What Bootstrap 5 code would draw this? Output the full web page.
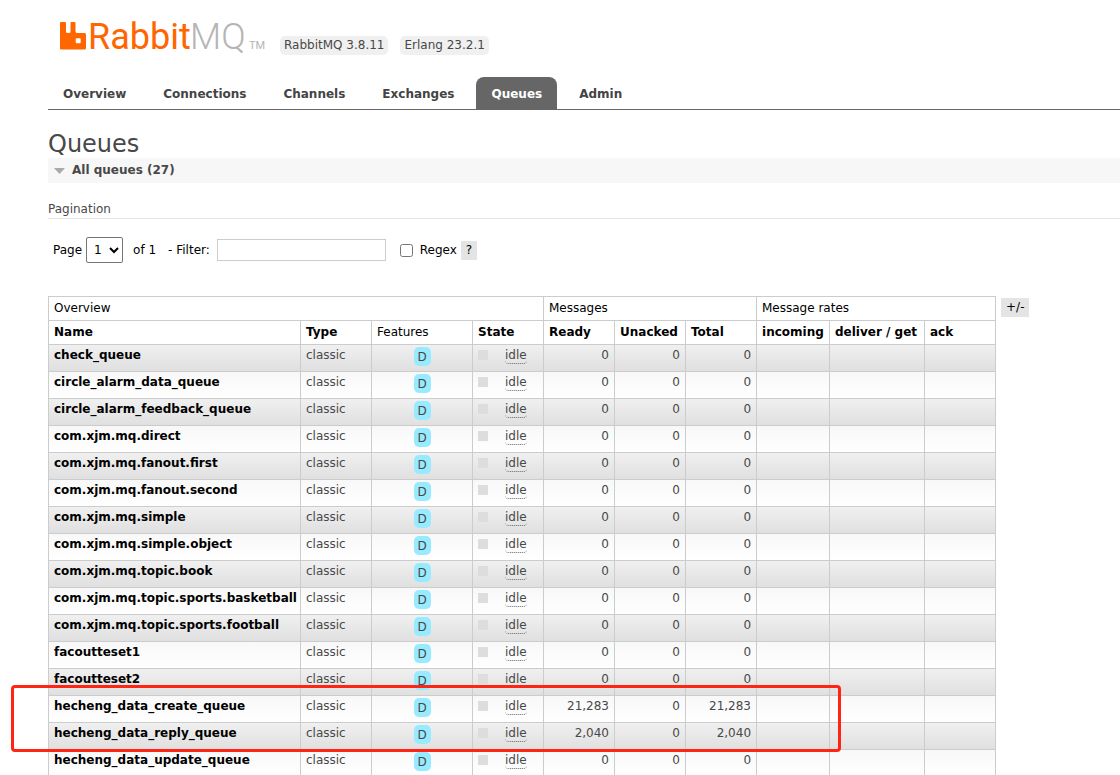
<!DOCTYPE html>
<html lang="en">
<head>
<meta charset="utf-8">
<meta name="viewport" content="width=device-width, initial-scale=1">
<title>RabbitMQ Management</title>
<link href="https://cdn.jsdelivr.net/npm/bootstrap@5.3.0/dist/css/bootstrap.min.css" rel="stylesheet">
<style>
  body { font: 12px/17px "DejaVu Sans", Verdana, sans-serif; color: #484848; background: #fff; }
  .shell { padding-left: 48px; }
  .masthead { height: 77px; padding: 12px 0 0 11px; }
  .version { background: #f0f0f0; border-radius: 5px; padding: 1px 4px; height: 19px; margin: 24px 12px 0 0; }
  .tabs { border-bottom: 1px solid #666; gap: 7px; }
  .tabs a { color: #444; font-weight: 700; line-height: 16px; padding: 9px 15px 7px; border-radius: 8px 8px 0 0; text-decoration: none; }
  .tabs a.active { background: #666; color: #fff; }
  h1 { font-size: 24px; line-height: 28px; font-weight: 400; margin: 20px 0 0; }
  .section-bar { background: #f7f7f7; font-size: 12px; line-height: 25px; font-weight: 700; margin: 0 0 18px; }
  .section-bar button { font: inherit; color: inherit; background: none; border: 0; padding: 0 6px; gap: 7px; }
  .sub { font-size: 12px; line-height: 17px; font-weight: 400; border-bottom: 1px solid #e4e4e4; margin: 0 0 18px; }
  .filters { color: #000; height: 26px; padding-left: 5px; }
  .filters select { font: inherit; width: 37px; height: 26px; padding: 0 0 0 3px; border: 1px solid #767676; border-radius: 2px; background: #fff; color: #000; margin: 0 10px 0 4px; }
  .filters input[type=text] { font: inherit; width: 169px; height: 22px; border: 1px solid #ccc; padding: 0 4px; margin: 0 14px 0 7px; }
  .filters input[type=checkbox] { width: 13px; height: 13px; margin: 0 7px 0 0; }
  .chip { font: inherit; background: #e4e4e4; border: 0; color: #000; padding: 1px 5px; height: 19px; }
  .queue-list { margin-top: 33px; gap: 5px; }
  .queue-list .chip { margin-top: 2px; }
  .queues { width: 948px; table-layout: fixed; border-collapse: collapse; color: #484848; }
  .queues th, .queues td { border: 1px solid #ccc; padding: 0 5px; white-space: nowrap; }
  .queues th { height: 24px; color: #000; font-weight: 400; }
  .queues th.sortable { font-weight: 700; }
  .queues td { height: 27px; padding-top: 2px; vertical-align: top; }
  .queues td a { color: #000; font-weight: 700; text-decoration: none; }
  .queues tbody tr:nth-child(odd) { background: linear-gradient(#f0f0f0, #dfdfdf); }
  .queues tbody tr:nth-child(even) { background: linear-gradient(#f8f8f8, #fff); }
  .feature { background: #98ebff; border-radius: 5px; padding: 1px 4px; width: 17px; height: 19px; line-height: 18px; }
  .queues abbr { line-height: 15px; height: 16px; border-bottom: 1px dotted #666; border-radius: 4px; text-decoration: none; cursor: default; margin-top: 1px; }
  .dot { width: 10px; height: 10px; background: #ddd; margin: 3px 17px 0 0; }
  .highlight { position: absolute; left: -38px; top: -11px; width: 830px; height: 67px; border: 3px solid #ff2515; border-radius: 4px; z-index: 2; pointer-events: none; }
</style>
<script defer src="https://cdn.jsdelivr.net/npm/bootstrap@5.3.0/dist/js/bootstrap.bundle.min.js"></script>
</head>
<body>
<div class="shell vh-100 overflow-hidden">
  <header class="masthead d-flex align-items-start">
    <a href="#" class="me-2" aria-label="RabbitMQ">
      <svg class="d-block" width="213" height="46" viewBox="0 0 213 46" font-family="Roboto, sans-serif">
        <path fill="#f60" fill-rule="evenodd" d="M2 10h4q1 0 1 1v8.500q0 1.500 1.500 1.500h1.500q1.500 0 1.500-1.500V11q0-1 1-1h3q1 0 1 1v8.500q0 1.500 1.500 1.500h7.500q1.500 0 1.500 1.500v13.500q0 1.500-1.500 1.500H2q-1 0-1-1V11q0-1 1-1zM17.700 26.300q-1 0-1 1v3q0 1 1 1h3q1 0 1-1v-3q0-1-1-1z"/>
        <text x="29" y="37" font-size="36" fill="#f60">Rabbit</text>
        <text x="131" y="37" font-size="36" font-weight="300" fill="#b5b5b5">MQ</text>
        <text x="190" y="37" font-size="11" fill="#b5b5b5">TM</text>
      </svg>
    </a>
    <span class="version">RabbitMQ 3.8.11</span>
    <span class="version">Erlang 23.2.1</span>
  </header>
  <nav class="tabs d-flex">
    <a href="#">Overview</a><a href="#">Connections</a><a href="#">Channels</a><a href="#">Exchanges</a><a href="#" class="active" aria-current="page">Queues</a><a href="#">Admin</a>
  </nav>
  <main>
    <h1>Queues</h1>
    <h2 class="section-bar"><button type="button" class="d-flex align-items-center"><svg width="11" height="6" viewBox="0 0 11 6"><path d="M0 0h11L5.500 6z" fill="#aaa"/></svg>All queues (27)</button></h2>
    <h3 class="sub">Pagination</h3>
    <form class="filters d-flex align-items-center">
      <label for="page">Page</label>
      <select id="page"><option>1</option></select>
      <span class="me-2">of 1</span>
      <label for="filter" class="ms-1">- Filter:</label>
      <input type="text" id="filter">
      <input type="checkbox" id="regex">
      <label for="regex" class="me-1">Regex</label>
      <button type="button" class="chip">?</button>
    </form>
    <div class="queue-list d-flex align-items-start">
      <table class="queues flex-shrink-0">
        <colgroup><col style="width:252px"><col style="width:71px"><col style="width:101px"><col style="width:71px"><col style="width:71px"><col style="width:71px"><col style="width:71px"><col style="width:73px"><col style="width:95px"><col style="width:71px"></colgroup>
        <thead>
          <tr><th colspan="4">Overview</th><th colspan="3">Messages</th><th colspan="3">Message rates</th></tr>
          <tr><th class="sortable">Name</th><th class="sortable">Type</th><th>Features</th><th class="sortable">State</th><th class="sortable">Ready</th><th class="sortable">Unacked</th><th class="sortable">Total</th><th class="sortable">incoming</th><th class="sortable">deliver / get</th><th class="sortable">ack</th></tr>
        </thead>
        <tbody id="rows"></tbody>
      </table>
      <button type="button" class="chip">+/-</button>
    </div>
  </main>
</div>
<script>
  const queues = [
    ["check_queue"], ["circle_alarm_data_queue"], ["circle_alarm_feedback_queue"],
    ["com.xjm.mq.direct"], ["com.xjm.mq.fanout.first"], ["com.xjm.mq.fanout.second"],
    ["com.xjm.mq.simple"], ["com.xjm.mq.simple.object"], ["com.xjm.mq.topic.book"],
    ["com.xjm.mq.topic.sports.basketball"], ["com.xjm.mq.topic.sports.football"],
    ["facoutteset1"], ["facoutteset2"],
    ["hecheng_data_create_queue", "21,283", true], ["hecheng_data_reply_queue", "2,040"],
    ["hecheng_data_update_queue"]
  ];
  document.getElementById("rows").innerHTML = queues.map(([name, ready = "0", marked]) => `
    <tr>
      <td class="position-relative"><a href="#">${name}</a>${marked ? '<div class="highlight"></div>' : ""}</td>
      <td>classic</td>
      <td><span class="feature d-block mx-auto">D</span></td>
      <td><div class="d-flex align-items-start"><span class="dot"></span><abbr title="Queue is idle">idle</abbr></div></td>
      <td class="text-end">${ready}</td><td class="text-end">0</td><td class="text-end">${ready}</td>
      <td></td><td></td><td></td>
    </tr>`).join("");
</script>
</body>
</html>
